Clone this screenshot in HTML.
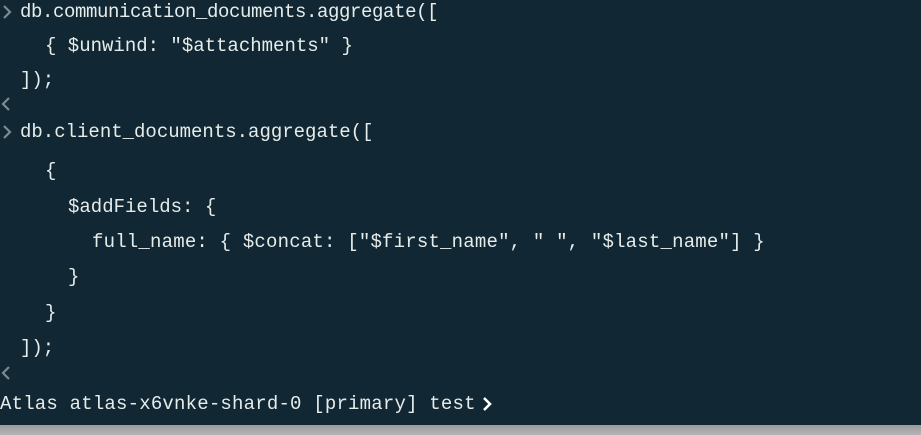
<!DOCTYPE html>
<html><head><style>
html,body{margin:0;padding:0;width:921px;height:435px;overflow:hidden;background:#112733;}
.l{position:absolute;font-family:"Liberation Mono",monospace;font-size:19px;color:#e6ecea;white-space:pre;line-height:24px;height:24px;}
.c{position:absolute;}
.bar{position:absolute;left:0;top:425px;width:921px;height:10px;background:linear-gradient(#9a9a9a,#b5b5b5);}
</style></head><body>
<svg class="c" style="left:0;top:0" width="14" height="24"><path d="M4 6 L10 12 L4 18" stroke="#7c8a90" stroke-width="2.2" fill="none"/></svg>
<div class="l" style="left:20px;top:0px;letter-spacing:-0.4px">db.communication_documents.aggregate([</div>
<div class="l" style="left:45px;top:34px">{ $unwind: "$attachments" }</div>
<div class="l" style="left:20px;top:68px">]);</div>
<svg class="c" style="left:0;top:92px" width="14" height="24"><path d="M9 6 L3 12 L9 18" stroke="#7c8a90" stroke-width="2.2" fill="none"/></svg>
<svg class="c" style="left:0;top:120px" width="14" height="24"><path d="M4 6 L10 12 L4 18" stroke="#7c8a90" stroke-width="2.2" fill="none"/></svg>
<div class="l" style="left:20px;top:120px">db.client_documents.aggregate([</div>
<div class="l" style="left:45px;top:159px">{</div>
<div class="l" style="left:68px;top:195px">$addFields: {</div>
<div class="l" style="left:92px;top:230px;letter-spacing:0.2px">full_name: { $concat: ["$first_name", " ", "$last_name"] }</div>
<div class="l" style="left:68px;top:265px">}</div>
<div class="l" style="left:45px;top:301px">}</div>
<div class="l" style="left:20px;top:336px">]);</div>
<svg class="c" style="left:0;top:361px" width="14" height="24"><path d="M9 6 L3 12 L9 18" stroke="#7c8a90" stroke-width="2.2" fill="none"/></svg>
<div class="l" style="left:0px;top:392px;letter-spacing:0.2px">Atlas atlas-x6vnke-shard-0 [primary] test</div>
<svg class="c" style="left:480px;top:392px" width="14" height="24"><path d="M4 6 L10 12 L4 18" stroke="#ffffff" stroke-width="2.6" fill="none"/></svg>
<div class="bar"></div>
</body></html>
